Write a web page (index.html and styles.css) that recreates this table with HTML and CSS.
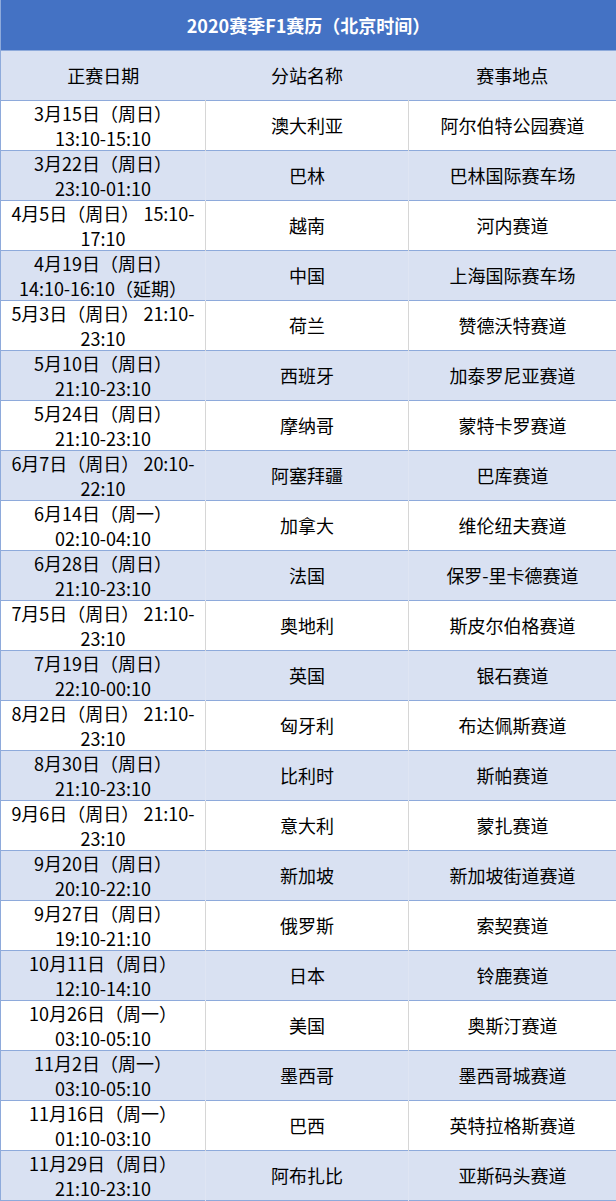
FILE: index.html
```html
<!DOCTYPE html>
<html lang="zh-CN">
<head>
<meta charset="utf-8">
<title>2020赛季F1赛历</title>
<link rel="stylesheet" href="styles.css">
</head>
<body>
<table class="cal">
  <colgroup><col class="c1"><col class="c2"><col class="c3"></colgroup>
  <thead>
    <tr class="title"><th colspan="3">2020赛季F1赛历（北京时间）</th></tr>
    <tr class="head"><th>正赛日期</th><th>分站名称</th><th>赛事地点</th></tr>
  </thead>
  <tbody>
    <tr><td>3月15日（周日）<br>13:10-15:10</td><td>澳大利亚</td><td>阿尔伯特公园赛道</td></tr>
    <tr class="alt"><td>3月22日（周日）<br>23:10-01:10</td><td>巴林</td><td>巴林国际赛车场</td></tr>
    <tr><td>4月5日（周日） 15:10-<br>17:10</td><td>越南</td><td>河内赛道</td></tr>
    <tr class="alt"><td>4月19日（周日）<br>14:10-16:10（延期）</td><td>中国</td><td>上海国际赛车场</td></tr>
    <tr><td>5月3日（周日） 21:10-<br>23:10</td><td>荷兰</td><td>赞德沃特赛道</td></tr>
    <tr class="alt"><td>5月10日（周日）<br>21:10-23:10</td><td>西班牙</td><td>加泰罗尼亚赛道</td></tr>
    <tr><td>5月24日（周日）<br>21:10-23:10</td><td>摩纳哥</td><td>蒙特卡罗赛道</td></tr>
    <tr class="alt"><td>6月7日（周日） 20:10-<br>22:10</td><td>阿塞拜疆</td><td>巴库赛道</td></tr>
    <tr><td>6月14日（周一）<br>02:10-04:10</td><td>加拿大</td><td>维伦纽夫赛道</td></tr>
    <tr class="alt"><td>6月28日（周日）<br>21:10-23:10</td><td>法国</td><td>保罗-里卡德赛道</td></tr>
    <tr><td>7月5日（周日） 21:10-<br>23:10</td><td>奥地利</td><td>斯皮尔伯格赛道</td></tr>
    <tr class="alt"><td>7月19日（周日）<br>22:10-00:10</td><td>英国</td><td>银石赛道</td></tr>
    <tr><td>8月2日（周日） 21:10-<br>23:10</td><td>匈牙利</td><td>布达佩斯赛道</td></tr>
    <tr class="alt"><td>8月30日（周日）<br>21:10-23:10</td><td>比利时</td><td>斯帕赛道</td></tr>
    <tr><td>9月6日（周日） 21:10-<br>23:10</td><td>意大利</td><td>蒙扎赛道</td></tr>
    <tr class="alt"><td>9月20日（周日）<br>20:10-22:10</td><td>新加坡</td><td>新加坡街道赛道</td></tr>
    <tr><td>9月27日（周日）<br>19:10-21:10</td><td>俄罗斯</td><td>索契赛道</td></tr>
    <tr class="alt"><td>10月11日（周日）<br>12:10-14:10</td><td>日本</td><td>铃鹿赛道</td></tr>
    <tr><td>10月26日（周一）<br>03:10-05:10</td><td>美国</td><td>奥斯汀赛道</td></tr>
    <tr class="alt"><td>11月2日（周一）<br>03:10-05:10</td><td>墨西哥</td><td>墨西哥城赛道</td></tr>
    <tr><td>11月16日（周一）<br>01:10-03:10</td><td>巴西</td><td>英特拉格斯赛道</td></tr>
    <tr class="alt"><td>11月29日（周日）<br>21:10-23:10</td><td>阿布扎比</td><td>亚斯码头赛道</td></tr>
  </tbody>
</table>
</body>
</html>
```
FILE: styles.css
```css
html, body {
  margin: 0;
  padding: 0;
  background: #ffffff;
}
body {
  font-family: "Noto Sans CJK SC", "Noto Sans", "Liberation Sans", sans-serif;
  color: #000;
}
.cal {
  width: 616px;
  border-collapse: collapse;
  table-layout: fixed;
  font-size: 18px;
  line-height: 24.5px;
}
.c1 { width: 205px; }
.c2 { width: 203px; }
.c3 { width: 208px; }
.cal th, .cal td {
  text-align: center;
  vertical-align: middle;
  padding: 0;
  height: 49px;
  font-weight: normal;
  white-space: nowrap;
}
.cal tr {
  border-bottom: 1px solid #8eaadb;
}
.cal tr td + td {
  border-left: 1px solid #d6d6d6;
}
.cal tr.alt td + td {
  border-left: 1px solid #dfe5f3;
}
.cal tr td:first-child, .cal tr th:first-child {
  border-left: 1px solid #8eaadb;
}
.cal tr td:last-child, .cal tr th:last-child {
  border-right: 1px solid #3e4a60;
}
.title th {
  background: #4472c4;
  color: #ffffff;
  font-weight: bold;
  height: 50px;
}
.title {
  border-bottom: none;
}
.head th {
  background: #d9e1f2;
  height: 49px;
}
.alt td {
  background: #d9e1f2;
}
```
